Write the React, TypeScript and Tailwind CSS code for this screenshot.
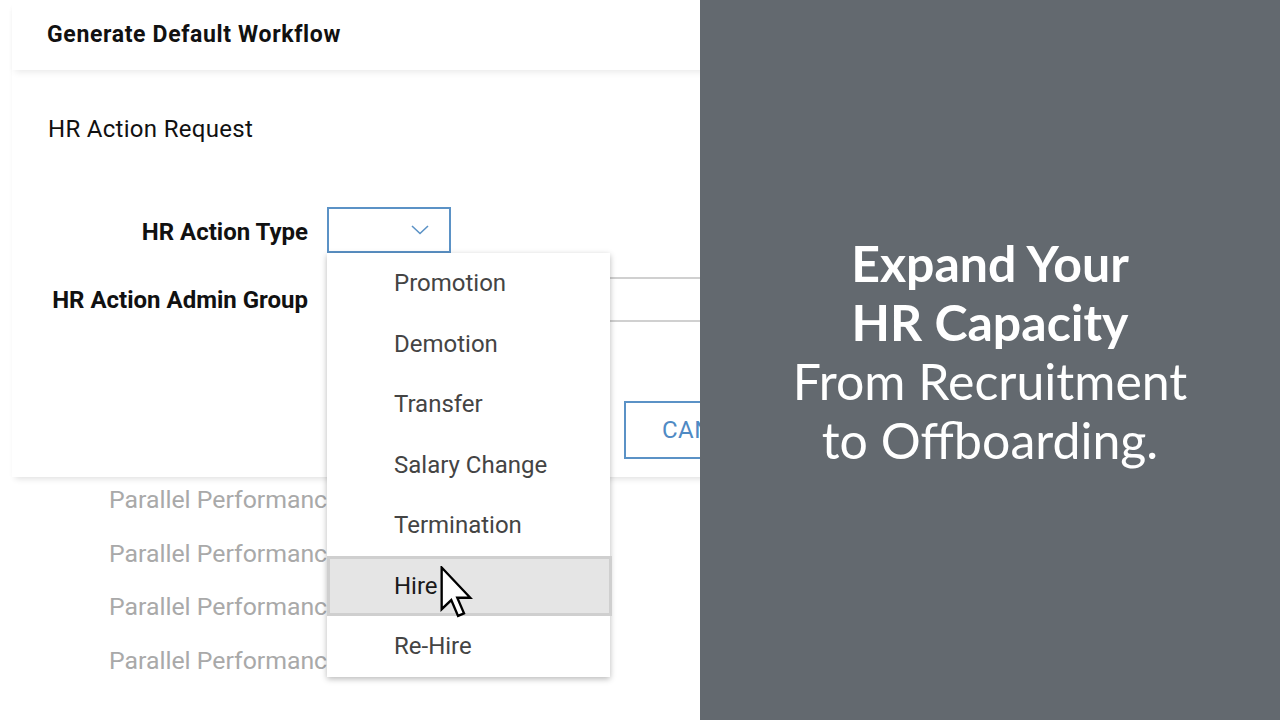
import React from 'react';

const options = ['Promotion', 'Demotion', 'Transfer', 'Salary Change', 'Termination', 'Hire', 'Re-Hire'];

function Cursor() {
  return (
    <svg width="34" height="52" viewBox="0 0 13 20" className="absolute left-[440px] top-[566px] z-30">
      <path
        d="M0.6 0.6 L0.6 16.6 L4.3 13.1 L6.9 19.2 L9.2 18.2 L6.6 12.2 L11.6 12.2 Z"
        fill="#fff"
        stroke="#000"
        strokeWidth="0.9"
        strokeLinejoin="miter"
      />
    </svg>
  );
}

export default function App() {
  return (
    <div className="flex w-[1280px] h-[720px] overflow-hidden bg-white">
      <div className="relative w-[700px] h-full overflow-hidden bg-white font-['Roboto',sans-serif]">
        {/* modal card */}
        <div className="relative z-10 ml-[12px] w-[900px] bg-white shadow-[0_5px_6px_-3px_rgba(0,0,0,0.12)]">
          <div className="h-[70px] flex items-center pl-[35px] shadow-[0_5px_7px_-3px_rgba(0,0,0,0.09)]">
            <h1 className="text-[23px] font-bold text-[#111] tracking-[0.65px]">Generate Default Workflow</h1>
          </div>
          <div className="pt-[45px] pb-[18px]">
            <div className="pl-[36px] text-[24px] leading-[28px] text-[#111] tracking-[0.3px]">HR Action Request</div>
            <div className="mt-[64px] grid grid-cols-[296px_1fr] gap-x-[19px] gap-y-[24px] items-center">
              <div className="text-right text-[24px] font-bold text-[#111] pt-[3px]">HR Action Type</div>
              <div className="w-[124px] h-[46px] border-2 border-[#5b92c6] flex items-center justify-end pr-[20px]">
                <svg width="18" height="10" viewBox="0 0 18 10">
                  <path d="M1 1 L9 8.5 L17 1" fill="none" stroke="#5b92c6" strokeWidth="1.6" />
                </svg>
              </div>
              <div className="text-right text-[24px] font-bold text-[#111]">HR Action Admin Group</div>
              <div className="h-[45px] border-2 border-[#d0d0d0]"></div>
            </div>
            <div className="mt-[79px] pl-[612px]">
              <button className="h-[58px] px-[36px] border-2 border-[#5b92c6] text-[24px] text-[#4f8ac4] tracking-[0.5px]">
                CANCEL
              </button>
            </div>
          </div>
        </div>

        {/* background list */}
        <div className="-mt-[4px] pl-[109px] flex flex-col">
          {[0, 1, 2, 3].map((i) => (
            <div key={i} className="h-[53.5px] leading-[53.5px] text-[24.8px] text-[#a9a9a9] whitespace-nowrap">
              Parallel Performance Review
            </div>
          ))}
        </div>

        {/* dropdown */}
        <div className="absolute left-[327px] top-[253px] z-20 w-[283px] bg-white shadow-[0_2px_6px_rgba(0,0,0,0.28)]">
          {options.map((o) => (
            <div
              key={o}
              className={
                o === 'Hire'
                  ? 'h-[60.5px] -mr-[2px] flex items-center pl-[64px] text-[24px] text-[#1a1a1a] bg-[#e5e5e5] border-[3px] border-[#cfcfcf]'
                  : 'h-[60.5px] flex items-center pl-[67px] text-[24px] text-[#444]'
              }
            >
              {o}
            </div>
          ))}
        </div>
        <Cursor />
      </div>

      <div className="flex-1 h-full bg-[#63696f] flex flex-col items-center justify-center pb-[16px] font-['Lato',sans-serif] text-white text-[50px] leading-[59px] text-center">
        <div className="font-bold">Expand Your</div>
        <div className="font-bold">HR Capacity</div>
        <div>From Recruitment</div>
        <div>to Offboarding.</div>
      </div>
    </div>
  );
}
